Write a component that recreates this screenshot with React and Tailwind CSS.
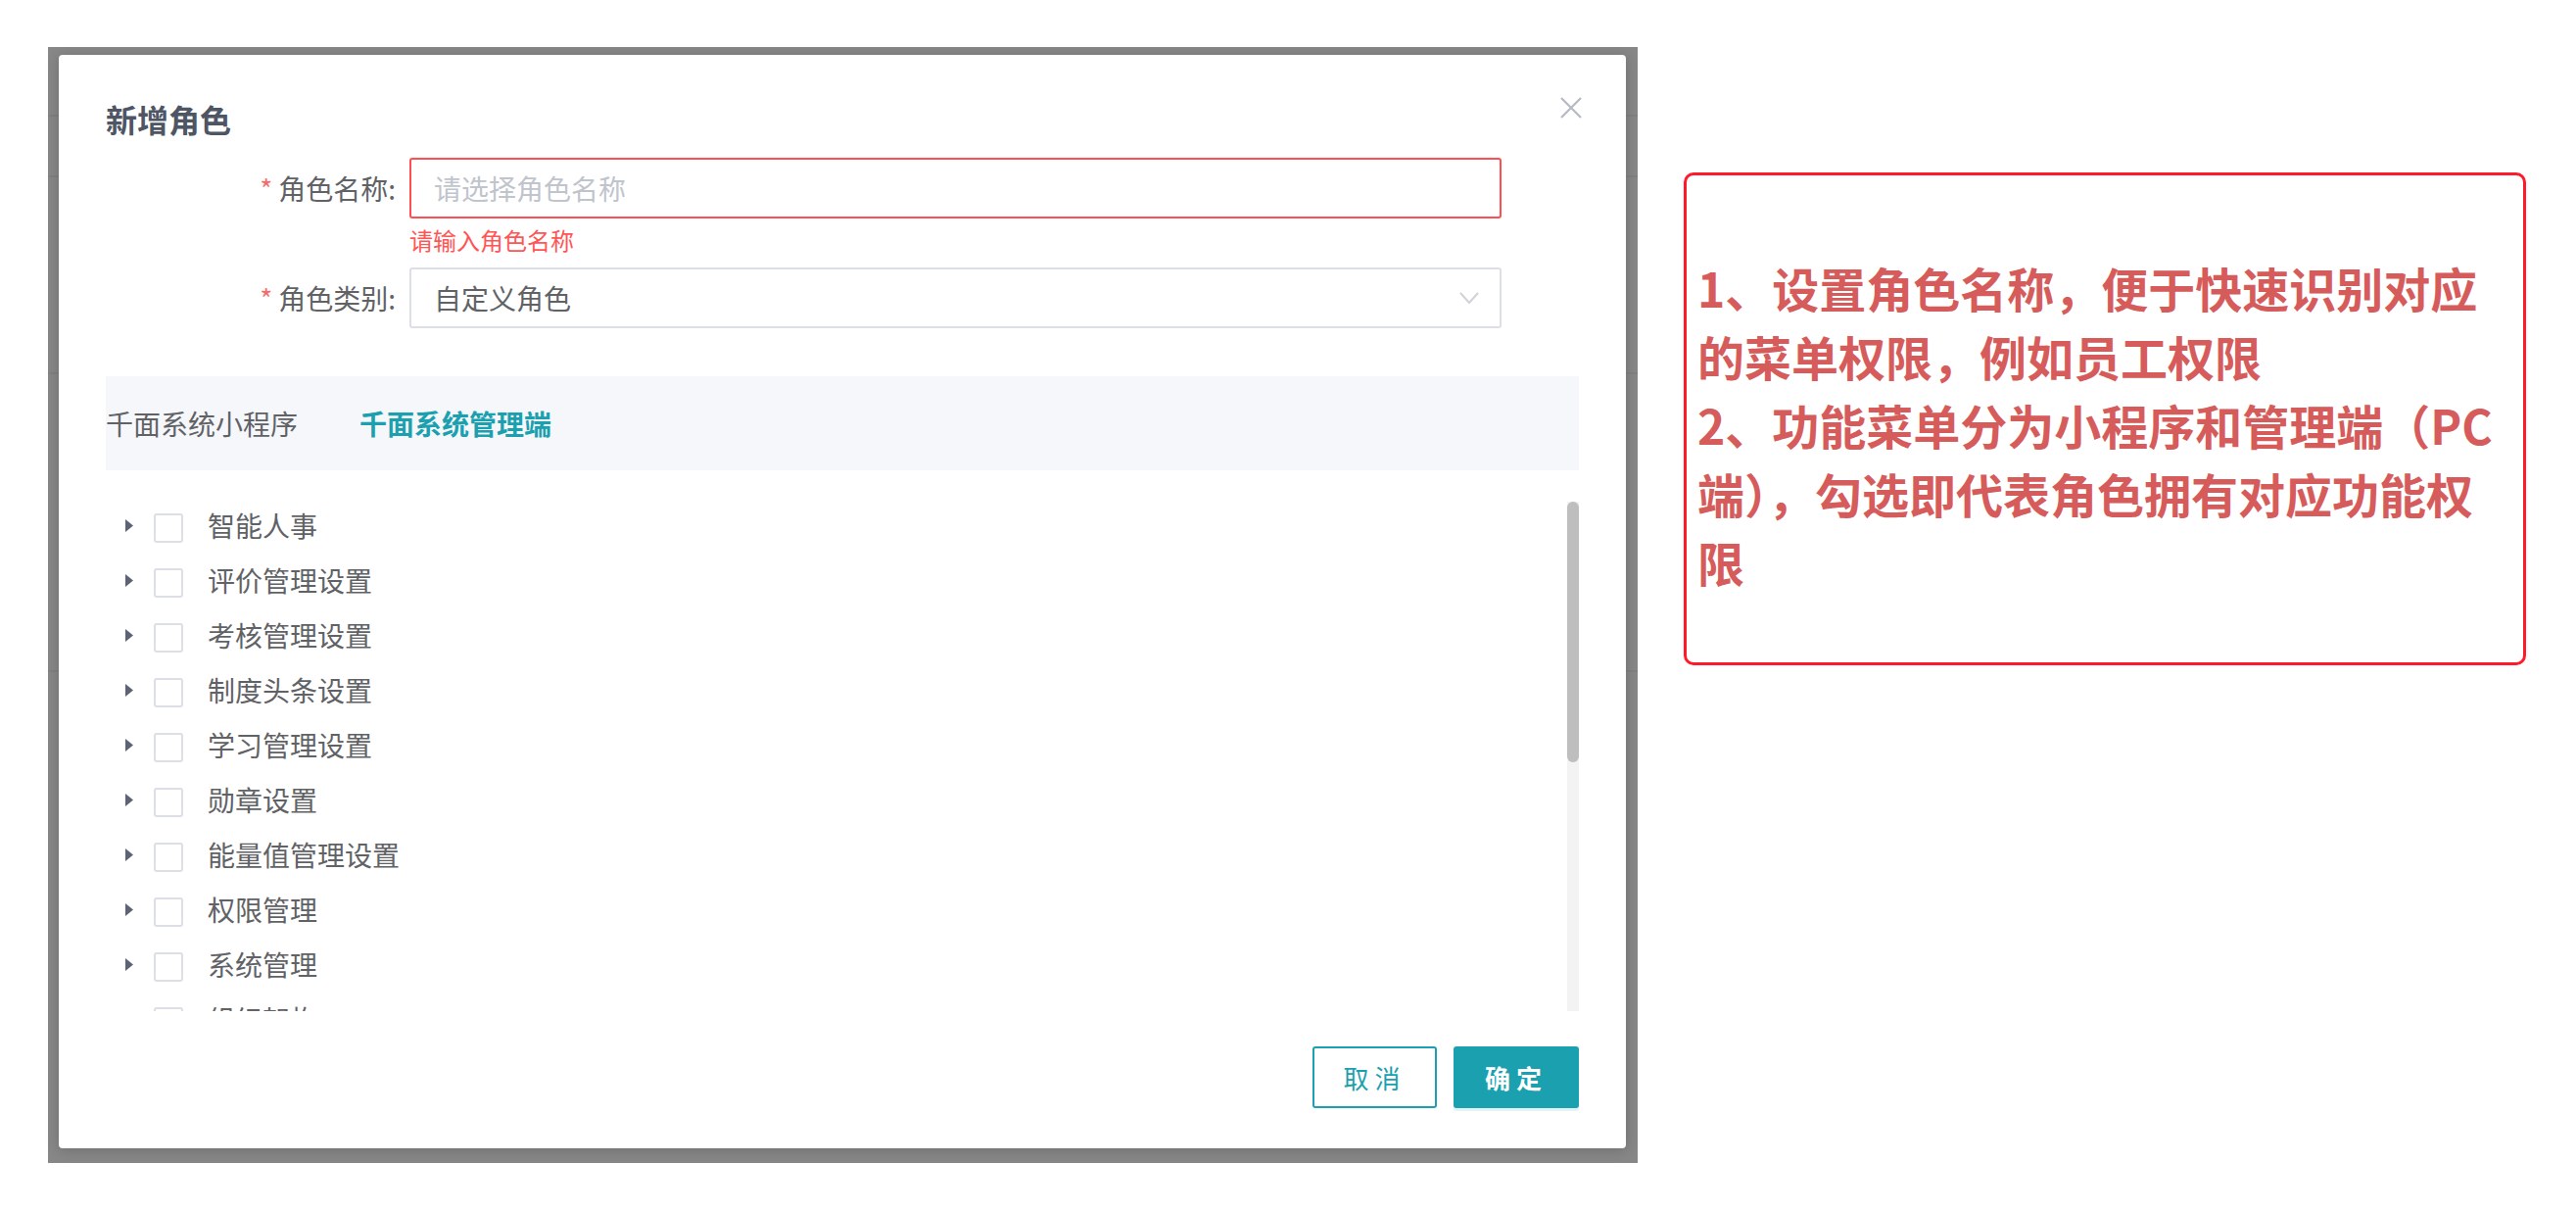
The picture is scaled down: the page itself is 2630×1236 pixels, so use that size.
import React from "react";

const menus = [
  "智能人事",
  "评价管理设置",
  "考核管理设置",
  "制度头条设置",
  "学习管理设置",
  "勋章设置",
  "能量值管理设置",
  "权限管理",
  "系统管理",
  "组织架构",
];

const Caret = () => (
  <svg width="8" height="13" viewBox="0 0 8 13" className="shrink-0">
    <path d="M0 0 L8 6.5 L0 13 Z" fill="#5d6373" />
  </svg>
);

const FormLabel = ({ children }) => (
  <div className="w-[310px] shrink-0 pr-[14px] text-right text-[28px] leading-[62px] text-[#606266]">
    <span className="mr-[6px] text-[#f56c6c]">*</span>
    {children}
  </div>
);

const RoleDialog = () => {
  return (
    <div className="relative flex h-[1116px] w-[1600px] flex-col rounded-[4px] bg-white px-[48px] pt-[45px] pb-[41px] shadow-[0_2px_14px_rgba(0,0,0,0.18)]">
      {/* header */}
      <h2 className="text-[32px] font-bold leading-[40px] text-[#4e5564]">新增角色</h2>
      <button className="absolute right-[44px] top-[42px] h-[24px] w-[24px]">
        <svg width="24" height="24" viewBox="0 0 24 24">
          <path d="M2 2 L22 22 M22 2 L2 22" stroke="#b6bac2" strokeWidth="2.2" />
        </svg>
      </button>

      {/* form */}
      <div className="mt-[20px] flex">
        <FormLabel>角色名称:</FormLabel>
        <div className="w-[1115px]">
          <div className="flex h-[62px] items-center rounded-[3px] border-2 border-[#ff4f50] pl-[23px] text-[28px] text-[#c0c4cc]">
            请选择角色名称
          </div>
          <div className="h-[50px] pt-[10px] text-[24px] leading-[24px] text-[#ff5555]">请输入角色名称</div>
        </div>
      </div>
      <div className="flex">
        <FormLabel>角色类别:</FormLabel>
        <div className="flex h-[62px] w-[1115px] items-center justify-between rounded-[3px] border-2 border-[#dcdfe6] pl-[23px] pr-[21px] text-[28px] text-[#606266]">
          <span>自定义角色</span>
          <svg width="20" height="13" viewBox="0 0 20 13">
            <path d="M1 1 L10 11 L19 1" fill="none" stroke="#cfd2d7" strokeWidth="2" />
          </svg>
        </div>
      </div>

      {/* tabs */}
      <div className="mt-[49px] flex h-[96px] items-center gap-[63px] bg-[#f5f7fa] text-[28px]">
        <span className="text-[#606266]">千面系统小程序</span>
        <span className="font-bold text-[#1ba0b0]">千面系统管理端</span>
      </div>

      {/* tree */}
      <div className="mt-[28px] flex h-[524px]">
        <div className="flex-1 overflow-hidden">
          {menus.map((m) => (
            <div key={m} className="flex h-[56px] items-center">
              <span className="ml-[20px]">
                <Caret />
              </span>
              <span className="ml-[21px] mt-[6px] h-[30px] w-[30px] shrink-0 rounded-[3px] border-2 border-[#dcdfe6] bg-white" />
              <span className="ml-[25px] text-[28px] text-[#606266]">{m}</span>
            </div>
          ))}
        </div>
        <div className="flex w-[12px] flex-col pt-[4px]">
          <div className="flex-1 bg-[#f3f3f3]">
            <div className="h-[266px] rounded-[6px] bg-[#bebebe]" />
          </div>
        </div>
      </div>

      {/* footer */}
      <div className="mt-[36px] flex justify-end gap-[17px]">
        <button className="h-[63px] w-[127px] rounded-[3px] border-2 border-[#1ba0b0] bg-white text-[26px] tracking-[6px] text-[#1ba0b0]">
          取消
        </button>
        <button className="h-[63px] w-[128px] rounded-[3px] bg-[#1ba0b0] text-[26px] font-bold tracking-[6px] text-white shadow-[0_3px_0_rgba(27,160,176,0.12)]">
          确定
        </button>
      </div>
    </div>
  );
};

export default function App() {
  return (
    <div className="flex h-[1236px] w-[2630px] items-start bg-white font-['Noto_Sans_CJK_SC','Noto_Sans',sans-serif]">
      {/* masked page with dialog */}
      <div className="relative ml-[49px] mt-[48px] h-[1139px] w-[1623px] bg-[#878787] pl-[11px] pt-[8px]">
        <div className="absolute left-0 right-0 top-[69px] h-[2px] bg-[#808080]" />
        <div className="absolute left-0 right-0 top-[131px] h-[2px] bg-[#808080]" />
        <div className="absolute left-0 right-0 top-[332px] h-[2px] bg-[#808080]" />
        <div className="absolute left-0 right-0 top-[636px] h-[2px] bg-[#808080]" />
        <RoleDialog />
      </div>

      {/* annotation */}
      <div className="ml-[47px] mt-[176px] h-[503px] w-[860px] rounded-[10px] border-[3px] border-[#ff1a2b] pl-[11px] pt-[79px] text-[48px] font-bold leading-[70px] text-[#d65c5c]">
        <div className="whitespace-nowrap">1、设置角色名称，便于快速识别对应</div>
        <div className="whitespace-nowrap">的菜单权限，例如员工权限</div>
        <div className="whitespace-nowrap">2、功能菜单分为小程序和管理端（PC</div>
        <div className="whitespace-nowrap">端），勾选即代表角色拥有对应功能权</div>
        <div className="whitespace-nowrap">限</div>
      </div>
    </div>
  );
}
